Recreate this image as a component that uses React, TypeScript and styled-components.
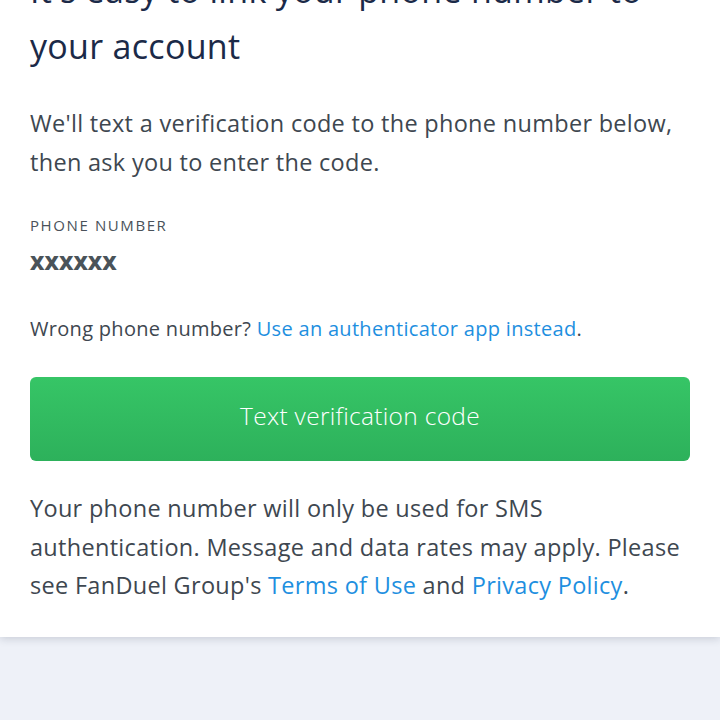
import React from 'react';
import styled, { createGlobalStyle } from 'styled-components';

const GlobalStyle = createGlobalStyle`
  html, body {
    margin: 0;
    padding: 0;
    background: #eef1f8;
    font-family: 'Open Sans', Lato, sans-serif;
    overflow: hidden;
  }
`;

const Page = styled.div`
  width: 720px;
  height: 720px;
  overflow: hidden;
  background: #eef1f8;
`;

const Card = styled.div`
  background: #ffffff;
  padding: 0 30px 32px;
  margin-top: -38px;
  box-shadow: 0 2px 8px rgba(40, 50, 70, 0.18);
`;

const Heading = styled.h1`
  margin: 0;
  font-size: 34px;
  line-height: 56px;
  font-weight: 400;
  letter-spacing: 0.3px;
  color: #1b2a48;
`;

const Paragraph = styled.p<{ gap?: number }>`
  margin: ${({ gap }) => gap ?? 30}px 0 0;
  font-size: 23.5px;
  line-height: 38.5px;
  letter-spacing: 0.3px;
  color: #3e4750;
`;

const Label = styled.div`
  margin-top: 34px;
  font-size: 15px;
  letter-spacing: 1.6px;
  color: #4a525a;
  line-height: 20px;
`;

const Phone = styled.div`
  margin-top: 15px;
  font-size: 20px;
  font-weight: 800;
  color: #4a5359;
  line-height: 26px;
`;

const Hint = styled.p`
  margin: 40px 0 0;
  font-size: 20px;
  line-height: 26px;
  letter-spacing: 0.3px;
  color: #3e4750;
`;

const Link = styled.a`
  color: #1e8fe0;
  text-decoration: none;
`;

const Button = styled.button`
  display: block;
  width: 100%;
  height: 84px;
  margin-top: 35px;
  padding: 0 0 7px;
  border: none;
  border-radius: 6px;
  background: linear-gradient(#36c566, #2db15b);
  color: #ffffff;
  font-family: 'Open Sans', Lato, sans-serif;
  font-size: 24.5px;
  font-weight: 300;
  letter-spacing: 0.3px;
  cursor: pointer;
`;

export default function App() {
  return (
    <Page>
      <GlobalStyle />
      <Card>
        <Heading>It's easy to link your phone number to your account</Heading>
        <Paragraph>
          We'll text a verification code to the phone number below, then ask you to enter the code.
        </Paragraph>
        <Label>PHONE NUMBER</Label>
        <Phone>XXXXXX</Phone>
        <Hint>
          Wrong phone number? <Link href="#">Use an authenticator app instead</Link>.
        </Hint>
        <Button>Text verification code</Button>
        <Paragraph gap={28}>
          Your phone number will only be used for SMS authentication. Message and data rates may apply. Please
          see FanDuel Group's <Link href="#">Terms of Use</Link> and <Link href="#">Privacy Policy</Link>.
        </Paragraph>
      </Card>
    </Page>
  );
}
